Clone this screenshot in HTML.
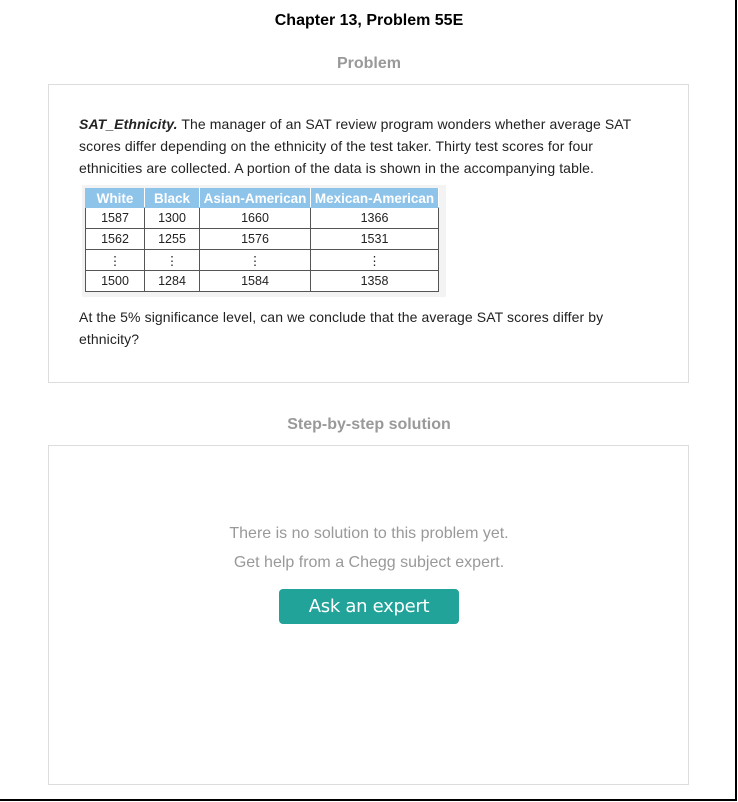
<!DOCTYPE html>
<html><head><style>
*{margin:0;padding:0;box-sizing:border-box}
body{width:738px;height:802px;background:#fff;font-family:"Liberation Sans",Arial,sans-serif;position:relative;overflow:hidden}
.frame{position:absolute;left:0;top:0;width:737px;height:801px;border-right:2px solid #000;border-bottom:2px solid #000}
h1{position:absolute;top:12px;left:0;width:738px;text-align:center;font-size:16px;font-weight:bold;color:#000}
.h2{position:absolute;left:0;width:738px;text-align:center;font-size:16px;font-weight:bold;color:#999}
.box{position:absolute;left:48px;width:641px;border:1px solid #ddd}
.p{position:absolute;left:79px;width:570px;font-size:14px;line-height:22px;color:#222;letter-spacing:0.1px}
table{position:absolute;left:85px;top:188px;border-collapse:collapse;font-size:12.5px;color:#222}
td{border:1px solid #555;height:21px;text-align:center;padding:0;background:#fff}
th{background:#8ec3ea;color:#fff;font-size:13.5px;height:19px;border:1px solid #8ec3ea;border-right:1px solid #fff}
.tw{position:absolute;left:82px;top:185px;width:364px;height:112px;background:#f3f3f3}
.msg{position:absolute;left:0;width:738px;text-align:center;font-size:16px;color:#999}
.btn{position:absolute;left:279px;top:589px;width:180px;height:35px;background:#21a399;color:#fff;border-radius:4px;font-size:18px;text-align:center;line-height:36px;font-family:"DejaVu Sans",sans-serif;letter-spacing:-0.3px}
</style></head><body>
<div class="frame"></div>
<h1>Chapter 13, Problem 55E</h1>
<div class="h2" style="top:55px">Problem</div>
<div class="box" style="top:84px;height:299px"></div>
<div class="p" style="top:113px"><b><i>SAT_Ethnicity.</i></b> The manager of an SAT review program wonders whether average SAT scores differ depending on the ethnicity of the test taker. Thirty test scores for four ethnicities are collected. A portion of the data is shown in the accompanying table.</div>
<div class="tw"></div>
<table>
<tr><th style="width:59px">White</th><th style="width:55px">Black</th><th style="width:111px">Asian-American</th><th style="width:128px">Mexican-American</th></tr>
<tr><td>1587</td><td>1300</td><td>1660</td><td>1366</td></tr>
<tr><td>1562</td><td>1255</td><td>1576</td><td>1531</td></tr>
<tr><td>⋮</td><td>⋮</td><td>⋮</td><td>⋮</td></tr>
<tr><td>1500</td><td>1284</td><td>1584</td><td>1358</td></tr>
</table>
<div class="p" style="top:306px">At the 5% significance level, can we conclude that the average SAT scores differ by ethnicity?</div>
<div class="h2" style="top:416px">Step-by-step solution</div>
<div class="box" style="top:445px;height:340px"></div>
<div class="msg" style="top:525px">There is no solution to this problem yet.</div>
<div class="msg" style="top:554px">Get help from a Chegg subject expert.</div>
<div class="btn">Ask an expert</div>
</body></html>
